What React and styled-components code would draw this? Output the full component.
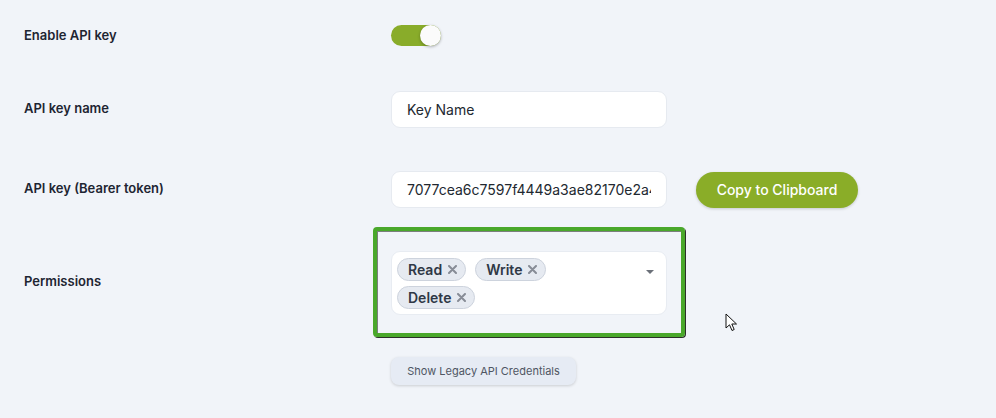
import React from "react"
import styled, { createGlobalStyle } from "styled-components"

const GlobalStyle = createGlobalStyle`
  html, body {
    margin: 0;
    padding: 0;
    background: #f1f4f9;
    font-family: "Inter", "Noto Sans", sans-serif;
  }
`

const Page = styled.div`
  position: relative;
  width: 996px;
  height: 418px;
  box-sizing: border-box;
  padding: 25px 0 0 24px;
  display: flex;
  flex-direction: column;
  gap: 43px;
`

const Row = styled.div`
  display: grid;
  grid-template-columns: 367px auto auto;
  align-items: center;
  justify-content: start;
  margin-bottom: ${({ after }) => after || 0}px;
`

const Label = styled.div`
  font-size: 13px;
  font-weight: 600;
  color: #1e2532;
  margin-top: ${({ shift }) => shift || -4}px;
`

const Toggle = styled.div`
  width: 50px;
  height: 21px;
  border-radius: 11px;
  background: #89ac2a;
  display: flex;
  justify-content: flex-end;
`

const Knob = styled.div`
  width: 21px;
  height: 21px;
  border-radius: 50%;
  background: #fbfbfb;
  box-shadow: 0 1px 3px rgba(0, 0, 0, 0.3);
`

const Input = styled.div`
  width: 276px;
  height: 37px;
  box-sizing: border-box;
  padding: 0 15px;
  background: #fff;
  border: 1px solid #e6eaf0;
  border-radius: 9px;
  display: flex;
  align-items: center;
  font-size: 14px;
  color: #222830;
  white-space: nowrap;
  overflow: hidden;
`

const Clip = styled.span`
  display: block;
  overflow: hidden;
  width: 100%;
`

const CopyButton = styled.button`
  margin-left: 29px;
  height: 36px;
  width: 162px;
  border: none;
  border-radius: 18px;
  background: #8aad28;
  color: #fff;
  font-family: inherit;
  font-size: 14px;
  font-weight: 500;
  box-shadow: 0 1px 3px rgba(0, 0, 0, 0.18);
`

const SelectWrap = styled.div`
  position: relative;
`

const Highlight = styled.div`
  position: absolute;
  top: -24px;
  left: -18px;
  right: -18px;
  bottom: -22px;
  border: 4px solid #4aa82b;
  border-radius: 4px;
  box-shadow: 1px 1px 0 #2b3028, inset 1px 1px 0 rgba(43, 48, 40, 0.6);
  pointer-events: none;
`

const Select = styled.div`
  width: 276px;
  height: 64px;
  box-sizing: border-box;
  background: #fff;
  border: 1px solid #e8ecf2;
  border-radius: 9px;
  padding: 6px 0 0 5px;
  display: flex;
  justify-content: space-between;
`

const Values = styled.div`
  width: 230px;
  display: flex;
  flex-wrap: wrap;
  column-gap: 9px;
  row-gap: 5px;
  align-content: flex-start;
`

const Chip = styled.div`
  height: 23px;
  box-sizing: border-box;
  padding: 0 8px 0 10px;
  display: flex;
  align-items: center;
  gap: 6px;
  background: #e6eaf1;
  border: 1px solid #cdd3dd;
  border-radius: 12px;
  font-size: 14px;
  font-weight: 600;
  color: #2f3846;
`

const Remove = styled.svg`
  display: block;
`

const Caret = styled.div`
  margin: 12px 12px 0 0;
  width: 0;
  height: 0;
  border-left: 4px solid transparent;
  border-right: 4px solid transparent;
  border-top: 4px solid #6b7079;
`

const LegacyButton = styled.button`
  margin-left: 367px;
  margin-top: -1px;
  width: 185px;
  height: 28px;
  border: none;
  border-radius: 8px;
  background: #e6ebf4;
  color: #4f5663;
  font-family: inherit;
  font-size: 11px;
  box-shadow: 0 1px 3px rgba(0, 0, 0, 0.16);
`

const Cursor = styled.svg`
  position: absolute;
  left: 725px;
  top: 313px;
`

export default function App() {
  return (
    <>
      <GlobalStyle />
      <Page>
        <Row after={2}>
          <Label shift={-1}>Enable API key</Label>
          <Toggle>
            <Knob />
          </Toggle>
        </Row>
        <Row>
          <Label>API key name</Label>
          <Input>Key Name</Input>
        </Row>
        <Row>
          <Label>API key (Bearer token)</Label>
          <Input>
            <Clip>7077cea6c7597f4449a3ae82170e2a4b91c3</Clip>
          </Input>
          <CopyButton>Copy to Clipboard</CopyButton>
        </Row>
        <Row>
          <Label>Permissions</Label>
          <SelectWrap>
            <Highlight />
            <Select>
              <Values>
                {["Read", "Write", "Delete"].map(v => (
                  <Chip key={v}>
                    {v}
                    <Remove width="9" height="9" viewBox="0 0 9 9">
                      <path
                        d="M1 1 L8 8 M8 1 L1 8"
                        stroke="#878c96"
                        strokeWidth="2"
                        strokeLinecap="round"
                      />
                    </Remove>
                  </Chip>
                ))}
              </Values>
              <Caret />
            </Select>
          </SelectWrap>
        </Row>
        <LegacyButton>Show Legacy API Credentials</LegacyButton>
        <Cursor width="14" height="20" viewBox="0 0 14 20">
          <path
            d="M1 1 L1 15 L4.5 11.8 L7 17.5 L9.2 16.5 L6.8 11 L11.5 11 Z"
            fill="#fff"
            stroke="#111"
            strokeWidth="1"
            strokeLinejoin="miter"
          />
        </Cursor>
      </Page>
    </>
  )
}
